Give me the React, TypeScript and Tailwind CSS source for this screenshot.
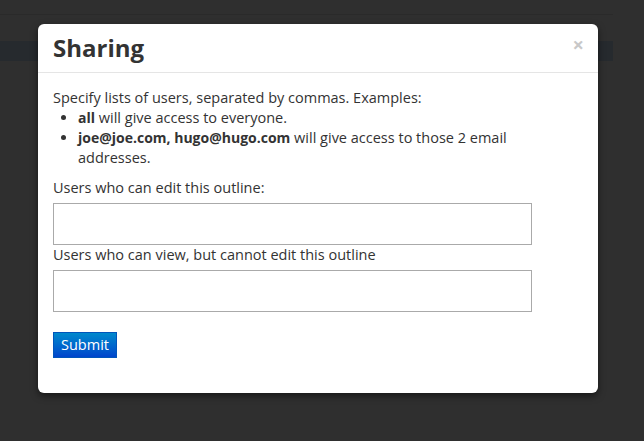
import React from 'react';

export default function App() {
  return (
    <div className="relative h-[441px] w-[644px] overflow-hidden bg-[#2f2f2f] font-['Open_Sans',sans-serif] text-[14.5px] leading-5 text-[#333]">
      {/* Page behind the overlay */}
      <div className="h-[15px] w-[613px] border-b border-[#2a2a2a]" />
      <div className="mt-[26px] h-[20px] w-[613px] bg-[#262a2e]" />

      {/* Sharing modal */}
      <div className="absolute left-[38px] top-[24px] w-[560px] rounded-md bg-white shadow-[0_3px_7px_rgba(0,0,0,0.5)]">
        <div className="flex h-[49px] items-center justify-between border-b border-[#e5e5e5] px-[15px]">
          <h3 className="text-[24px] font-bold leading-[30px] text-[#333]">Sharing</h3>
          <button className="mr-[-1px] mt-[-6px] text-[20px] font-bold leading-5 text-[#c8c8c8]">×</button>
        </div>

        <div className="w-[509px] px-[15px] pb-[35px] pt-[15px]">
          <p>Specify lists of users, separated by commas. Examples:</p>
          <ul className="mb-[10px] ml-[25px] list-disc">
            <li>
              <b className="text-[14px]">all</b> will give access to everyone.
            </li>
            <li>
              <b className="text-[14px]">joe@joe.com, hugo@hugo.com</b> will give access to those 2 email addresses.
            </li>
          </ul>

          <label className="block">Users who can edit this outline:</label>
          <textarea className="mt-[5px] block h-[42px] w-[479px] resize-none border border-[#aaa] bg-white outline-none" />

          <label className="block">Users who can view, but cannot edit this outline</label>
          <textarea className="mt-[5px] block h-[42px] w-[479px] resize-none border border-[#aaa] bg-white outline-none" />

          <button className="mt-[20px] h-[26px] border border-[#0055bb] bg-gradient-to-b from-[#0088cc] to-[#0044cc] px-[7px] text-[14.5px] leading-5 text-white">
            Submit
          </button>
        </div>
      </div>
    </div>
  );
}
